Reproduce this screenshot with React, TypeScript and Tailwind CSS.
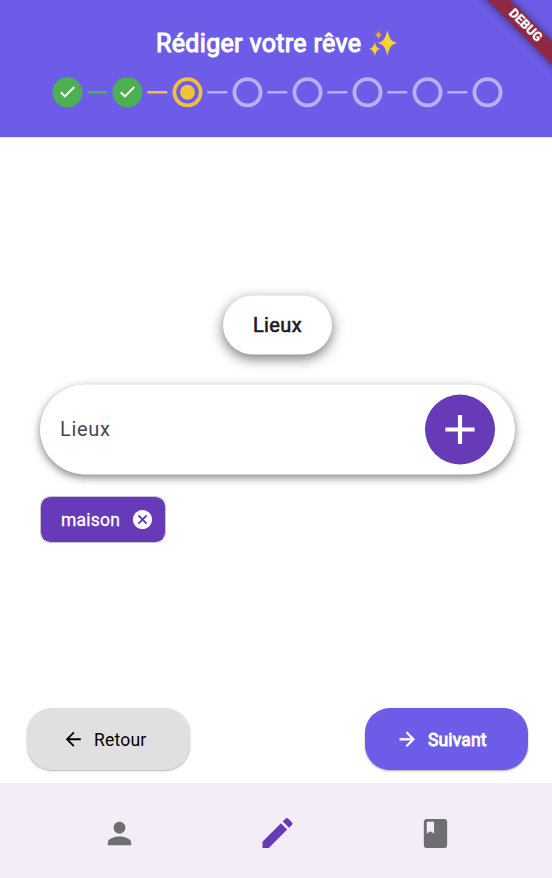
import type { ReactNode } from "react";

type StepState = "done" | "current" | "todo";

const steps: StepState[] = ["done", "done", "current", "todo", "todo", "todo", "todo", "todo"];

function Icon({ d, className }: { d: string; className: string }) {
  return (
    <svg viewBox="0 0 24 24" className={`shrink-0 fill-current ${className}`} aria-hidden="true">
      <path d={d} />
    </svg>
  );
}

const paths = {
  check: "M9 16.17 4.83 12l-1.42 1.41L9 19 21 7l-1.41-1.41z",
  plus: "M19 13h-6v6h-2v-6H5v-2h6V5h2v6h6z",
  cancel:
    "M12 2C6.47 2 2 6.47 2 12s4.47 10 10 10 10-4.47 10-10S17.53 2 12 2zm5 13.59L15.59 17 12 13.41 8.41 17 7 15.59 10.59 12 7 8.41 8.41 7 12 10.59 15.59 7 17 8.41 13.41 12 17 15.59z",
  back: "M20 11H7.83l5.59-5.59L12 4l-8 8 8 8 1.41-1.41L7.83 13H20z",
  forward: "M12 4l-1.41 1.41L16.17 11H4v2h12.17l-5.58 5.59L12 20l8-8z",
  person:
    "M12 12c2.21 0 4-1.79 4-4s-1.79-4-4-4-4 1.79-4 4 1.79 4 4 4zm0 2c-2.67 0-8 1.34-8 4v2h16v-2c0-2.66-5.33-4-8-4z",
  edit: "M3 17.25V21h3.75L17.81 9.94l-3.75-3.75zM20.71 7.04a1 1 0 0 0 0-1.41l-2.34-2.34a1 1 0 0 0-1.41 0l-1.83 1.83 3.75 3.75z",
  book: "M18 2H6c-1.1 0-2 .9-2 2v16c0 1.1.9 2 2 2h12c1.1 0 2-.9 2-2V4c0-1.1-.9-2-2-2zM6 4h5v8l-2.5-1.5L6 12z",
};

function Sparkles() {
  return (
    <svg viewBox="0 0 30 30" className="ml-[7px] h-[30px] w-[30px]" aria-hidden="true">
      <defs>
        <radialGradient id="gold">
          <stop offset="0" stopColor="#ffd92f" />
          <stop offset="0.6" stopColor="#fccb2f" />
          <stop offset="1" stopColor="#efb64b" />
        </radialGradient>
      </defs>
      <path fill="url(#gold)" d="M18.400 2C20.700 10.700 21.700 13.400 28.500 15 21.700 16.600 20.700 19.300 18.400 28 16.100 19.300 15.100 16.600 8.500 15c6.600-1.600 7.600-4.300 9.900-13z" />
      <path fill="url(#gold)" d="M5.800 14c1.400 4.600 2.100 6 5.700 7-3.600 1-4.300 2.400-5.700 7-1.400-4.600-2.100-6-5.700-7 3.600-1 4.300-2.400 5.700-7z" />
      <path fill="#f2a43a" d="M9.500 2.300c.8 2.900 1.300 3.900 3.900 4.600-2.600.7-3.100 1.700-3.900 4.600-.8-2.900-1.300-3.900-3.900-4.600 2.600-.7 3.100-1.700 3.900-4.600z" />
    </svg>
  );
}

function Step({ state }: { state: StepState }) {
  if (state === "done") {
    return (
      <svg viewBox="-0.5 -0.3 30 30" className="h-[30px] w-[30px] overflow-visible" aria-hidden="true">
        <circle cx="15" cy="15" r="15" fill="#4caf50" />
        <path
          d={paths.check}
          transform="translate(5 4.700) scale(0.82)"
          fill="white"
          stroke="white"
          strokeWidth="0.500"
        />
      </svg>
    );
  }
  const color = state === "current" ? "#f0c13b" : "#b9b1f4";
  return (
    <svg viewBox="-0.5 -0.3 30 30" className="h-[30px] w-[30px] overflow-visible" aria-hidden="true">
      <circle cx="15" cy="15" r="13.125" fill="none" stroke={color} strokeWidth="3.75" />
      {state === "current" && <circle cx="15" cy="15" r="7.500" fill={color} />}
    </svg>
  );
}

const lineColor: Record<StepState, string> = {
  done: "text-[#4caf50]",
  current: "text-[#f0c13b]",
  todo: "text-[#b5adf3]",
};

function Connector({ state }: { state: StepState }) {
  return (
    <svg
      viewBox="-0.3 0 20 3"
      className={`mx-[5px] h-[3px] w-5 overflow-visible ${lineColor[state]}`}
      aria-hidden="true"
    >
      <rect width="20" height="2.5" className="fill-current" />
    </svg>
  );
}

function NavItem({ children }: { children: ReactNode }) {
  return <button className="flex h-[50px] flex-1 items-center justify-center">{children}</button>;
}

export default function App() {
  return (
    <div className="relative flex h-[878px] w-[552px] flex-col overflow-hidden bg-white font-['Roboto',sans-serif] text-[#1d1b20]">
      <header className="flex h-[137px] shrink-0 flex-col items-center bg-[#6c5ce7] pt-[28px] pl-[3px]">
        <h1 className="flex h-[30px] items-center text-[25px] text-white [-webkit-text-stroke:1.05px_white]">
          <span className="w-[206px] pt-[2px] tracking-[0.33px] whitespace-nowrap">Rédiger votre rêve</span>
          <Sparkles />
        </h1>
        <div className="mt-[19px] mr-px flex items-center">
          {steps.map((state, i) => (
            <div key={i} className="flex items-center">
              {i > 0 && <Connector state={i === 1 ? "done" : i === 2 ? "current" : "todo"} />}
              <Step state={state} />
            </div>
          ))}
        </div>
      </header>

      <main className="flex flex-1 flex-col border-t border-[#e2dffa] pt-[158px] pr-[37px] pl-10">
        <div className="flex h-[59px] w-[109px] -translate-y-[0.5px] items-center justify-center self-center rounded-[30px] bg-white pb-px text-[20px] tracking-[0.4px] shadow-[0_4px_13px_rgba(0,0,0,0.55)] [-webkit-text-stroke:0.6px_currentColor]">
          Lieux
        </div>
        <div className="mt-[30px] flex h-[90px] -translate-y-[0.5px] items-center justify-between rounded-[45px] bg-white pr-5 pl-5 shadow-[0_3px_9px_rgba(0,0,0,0.5)]">
          <span className="pb-[2px] text-[20px] tracking-[0.7px] text-[#49454f]">Lieux</span>
          <button className="flex h-[70px] w-[70px] items-center justify-center rounded-full bg-[#673ab7] text-white">
            <Icon d={paths.plus} className="h-[50px] w-[50px]" />
          </button>
        </div>
        <div className="mt-[21px] flex h-[47px] w-[126px] items-center rounded-[10px] border-[1.5px] border-[#cac4d0] bg-[#673ab7] bg-clip-padding pl-5 text-white">
          <span className="w-[59px] pt-px text-[17.5px] tracking-[0.2px] whitespace-nowrap [-webkit-text-stroke:0.3px_white]">
            maison
          </span>
          <Icon d={paths.cancel} className="ml-[11px] h-[23px] w-[23px]" />
        </div>
      </main>

      <div className="flex h-[75px] shrink-0 items-start justify-between pr-[24.500px] pl-[27px] text-[17.5px]">
        <button className="flex h-[62px] w-[163px] items-center rounded-[25px] bg-[#e0e0e0] pl-[34.500px] text-black shadow-[0_1px_2px_rgba(0,0,0,0.3)]">
          <Icon d={paths.back} className="mt-px h-[22.500px] w-[22.500px]" />
          <span className="ml-[10px] pt-[2px] tracking-[0.2px]">Retour</span>
        </button>
        <button className="flex h-[62px] w-[163px] items-center rounded-[25px] bg-[#6c5ce7] pl-[31px] text-white shadow-[0_1px_2px_rgba(0,0,0,0.35)]">
          <Icon d={paths.forward} className="mt-px h-[22.500px] w-[22.500px] stroke-white stroke-[0.5]" />
          <span className="ml-[10px] pt-[2px] tracking-[0.15px] [-webkit-text-stroke:0.9px_white]">Suivant</span>
        </button>
      </div>

      <nav className="flex h-[95px] shrink-0 items-center bg-[#f3edf7] pt-[5px] pr-[37px] pl-10 text-[#6f6d73]">
        <NavItem>
          <Icon d={paths.person} className="h-[35px] w-[35px]" />
        </NavItem>
        <NavItem>
          <Icon d={paths.edit} className="h-10 w-10 translate-x-[0.5px] text-[#673ab7]" />
        </NavItem>
        <NavItem>
          <Icon d={paths.book} className="h-[35px] w-[35px]" />
        </NavItem>
      </nav>

      <div className="absolute top-[17.500px] left-[465px] flex h-[15.500px] w-[120px] rotate-45 items-center justify-center bg-[#8e2845] text-[12.75px] leading-none font-bold text-white shadow-[0_0_8px_rgba(0,0,0,0.5)] [-webkit-text-stroke:0.3px_white]">
        DEBUG
      </div>
    </div>
  );
}
